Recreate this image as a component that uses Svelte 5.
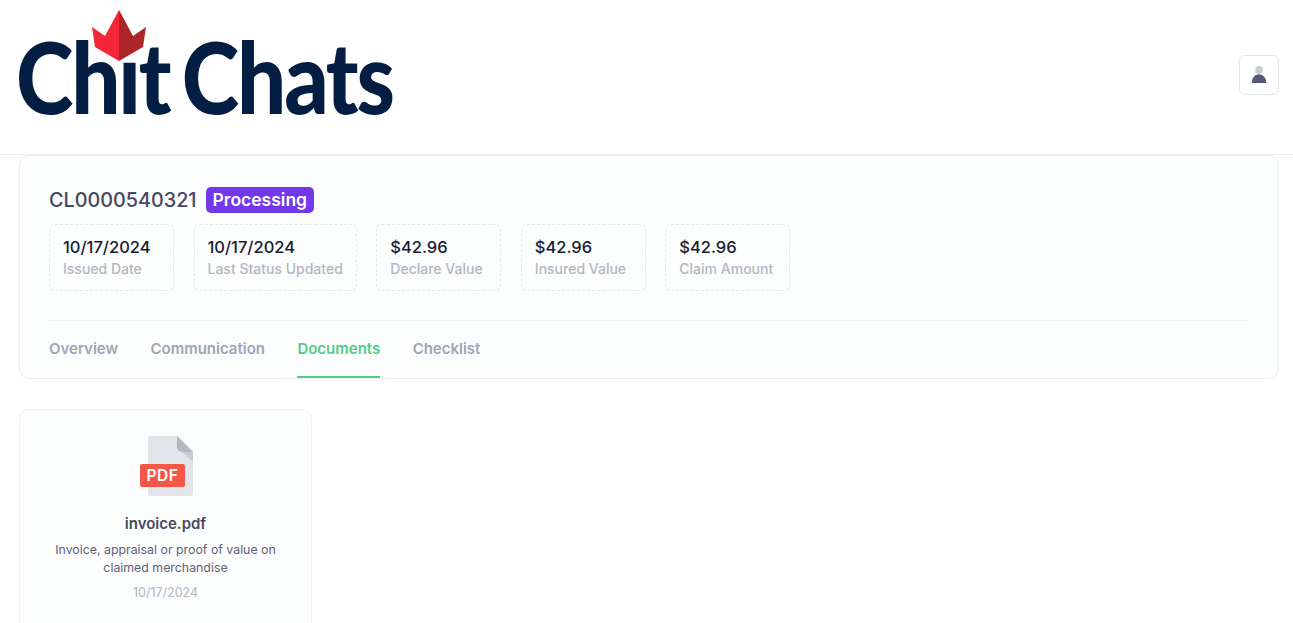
<script>
  const stats = [
    { value: '10/17/2024', label: 'Issued Date' },
    { value: '10/17/2024', label: 'Last Status Updated' },
    { value: '$42.96', label: 'Declare Value' },
    { value: '$42.96', label: 'Insured Value' },
    { value: '$42.96', label: 'Claim Amount' }
  ];
  const tabs = ['Overview', 'Communication', 'Documents', 'Checklist'];
</script>

<div class="page">
  <header class="header">
    <div class="logo">
      <span class="logo-text">Chit Chats</span>
      <svg class="crown" viewBox="-4 -4 62 60" width="62" height="60" aria-hidden="true">
        <path d="M27 0 L41 26 L54 17 L51 37 L27 51 L3 37 L0 17 L13 26 Z" fill="#fff" stroke="#fff" stroke-width="5" />
        <path d="M27 0 L27 51 L3 37 L0 17 L13 26 Z" fill="#f42536" />
        <path d="M27 0 L27 51 L51 37 L54 17 L41 26 Z" fill="#ab2529" />
      </svg>
    </div>
    <button class="user" aria-label="User">
      <svg viewBox="0 0 16 18" width="16" height="18" aria-hidden="true">
        <circle cx="8" cy="3.9" r="3.8" fill="#c9cad4" />
        <path d="M8 8.2 C3.5 8.2 1 12 .6 17 H15.4 C15 12 12.5 8.2 8 8.2 Z" fill="#565a77" />
      </svg>
    </button>
  </header>

  <main class="main">
    <section class="card">
      <div class="title-row">
        <h1>CL0000540321</h1>
        <span class="badge">Processing</span>
      </div>
      <div class="stats">
        {#each stats as s}
          <div class="stat">
            <div class="value">{s.value}</div>
            <div class="label">{s.label}</div>
          </div>
        {/each}
      </div>
      <nav class="tabs">
        {#each tabs as t}
          <span class="tab" class:active={t === 'Documents'}>{t}</span>
        {/each}
      </nav>
    </section>

    <section class="doc">
      <svg class="pdf" viewBox="0 0 53 60" width="53" height="60" aria-hidden="true">
        <path d="M10 0 H37 L53 16 V57 a3 3 0 0 1 -3 3 H11 a3 3 0 0 1 -3 -3 V3 a3 3 0 0 1 2 -3 Z" fill="#e1e4e8" />
        <path d="M37 0 L53 16 V26 L41 15 a5 5 0 0 1 -4 -4 Z" fill="#c9ccd3" />
        <path d="M37 0 L53 16 H42 a5 5 0 0 1 -5 -5 Z" fill="#b4b8bf" />
        <rect x="0" y="28" width="45" height="23" rx="2" fill="#f4574a" />
        <text x="22.5" y="45" text-anchor="middle" class="pdf-text">PDF</text>
      </svg>
      <div class="doc-name">invoice.pdf</div>
      <p class="doc-desc">Invoice, appraisal or proof of value on claimed merchandise</p>
      <div class="doc-date">10/17/2024</div>
    </section>
  </main>
</div>

<style>
  :global(body) {
    margin: 0;
    background: #fff;
    font-family: Inter, "Liberation Sans", sans-serif;
    overflow: hidden;
  }
  .page {
    height: 623px;
    overflow: hidden;
  }
  .header {
    height: 155px;
    box-sizing: border-box;
    border-bottom: 1px solid #eceef2;
    display: flex;
    align-items: flex-start;
    justify-content: space-between;
    padding: 0 14px 0 19px;
  }
  .logo {
    position: relative;
    width: 380px;
    height: 130px;
  }
  .logo-text {
    display: inline-block;
    margin: 20px 0 0 -3px;
    font-family: Lato, sans-serif;
    font-weight: 900;
    font-size: 100px;
    line-height: 110px;
    letter-spacing: -2.5px;
    word-spacing: -7px;
    color: #031e42;
    white-space: nowrap;
    transform: scaleX(0.87);
    transform-origin: left center;
  }
  .crown {
    position: absolute;
    left: 69px;
    top: 6px;
  }
  .user {
    width: 40px;
    height: 40px;
    margin-top: 55px;
    padding: 0;
    background: #fff;
    border: 1px solid #e4e4ec;
    border-radius: 6px;
    display: flex;
    align-items: center;
    justify-content: center;
  }
  .main {
    padding: 0 14px 0 19px;
  }
  .card {
    box-sizing: border-box;
    height: 224px;
    padding: 30px 29px 0;
    background: #fcfdfd;
    border: 1px solid #eceef2;
    border-radius: 10px;
  }
  .title-row {
    display: flex;
    align-items: center;
    gap: 9px;
    height: 28px;
  }
  h1 {
    margin: 0;
    font-size: 19.8px;
    font-weight: 500;
    color: #474761;
  }
  .badge {
    height: 26px;
    line-height: 26px;
    padding: 0 7px;
    border-radius: 5px;
    background: #7239ea;
    color: #fff;
    font-size: 17.5px;
    font-weight: 600;
  }
  .stats {
    display: flex;
    gap: 19.5px;
    margin-top: 10px;
  }
  .stat {
    box-sizing: border-box;
    min-width: 125px;
    height: 67px;
    padding: 12px 13px 0;
    border: 1px dashed #e4e6ef;
    border-radius: 6px;
  }
  .value {
    font-size: 16.5px;
    line-height: 20px;
    font-weight: 500;
    color: #181c32;
  }
  .label {
    margin-top: 3px;
    font-size: 14px;
    line-height: 18px;
    font-weight: 500;
    color: #b5b5c3;
  }
  .tabs {
    display: flex;
    gap: 32.4px;
    height: 57px;
    margin-top: 29px;
    border-top: 1px solid #eff2f5;
  }
  .tab {
    display: block;
    box-sizing: border-box;
    height: 57px;
    line-height: 55px;
    font-size: 15px;
    font-weight: 600;
    color: #a1a5b7;
  }
  .tab.active {
    color: #50cd89;
    border-bottom: 2px solid #50cd89;
  }
  .doc {
    box-sizing: border-box;
    width: 293px;
    height: 240px;
    margin-top: 30px;
    padding: 26px 20px 0;
    background: #fcfdfd;
    border: 1px solid #eff2f5;
    border-radius: 10px;
    text-align: center;
    display: flex;
    flex-direction: column;
    align-items: center;
  }
  .pdf {
    margin-left: 2px;
    flex: none;
  }
  .pdf-text {
    font-family: Inter, sans-serif;
    font-weight: 600;
    font-size: 15.5px;
    letter-spacing: 0.6px;
    fill: #fff;
  }
  .doc-name {
    margin-top: 16.5px;
    font-size: 15px;
    line-height: 21px;
    font-weight: 600;
    color: #474761;
  }
  .doc-desc {
    margin: 7.5px 0 0;
    font-size: 12.35px;
    line-height: 18px;
    color: #5e6278;
  }
  .doc-date {
    margin-top: 7px;
    font-size: 12.5px;
    line-height: 18px;
    color: #b5b5c3;
  }
</style>
